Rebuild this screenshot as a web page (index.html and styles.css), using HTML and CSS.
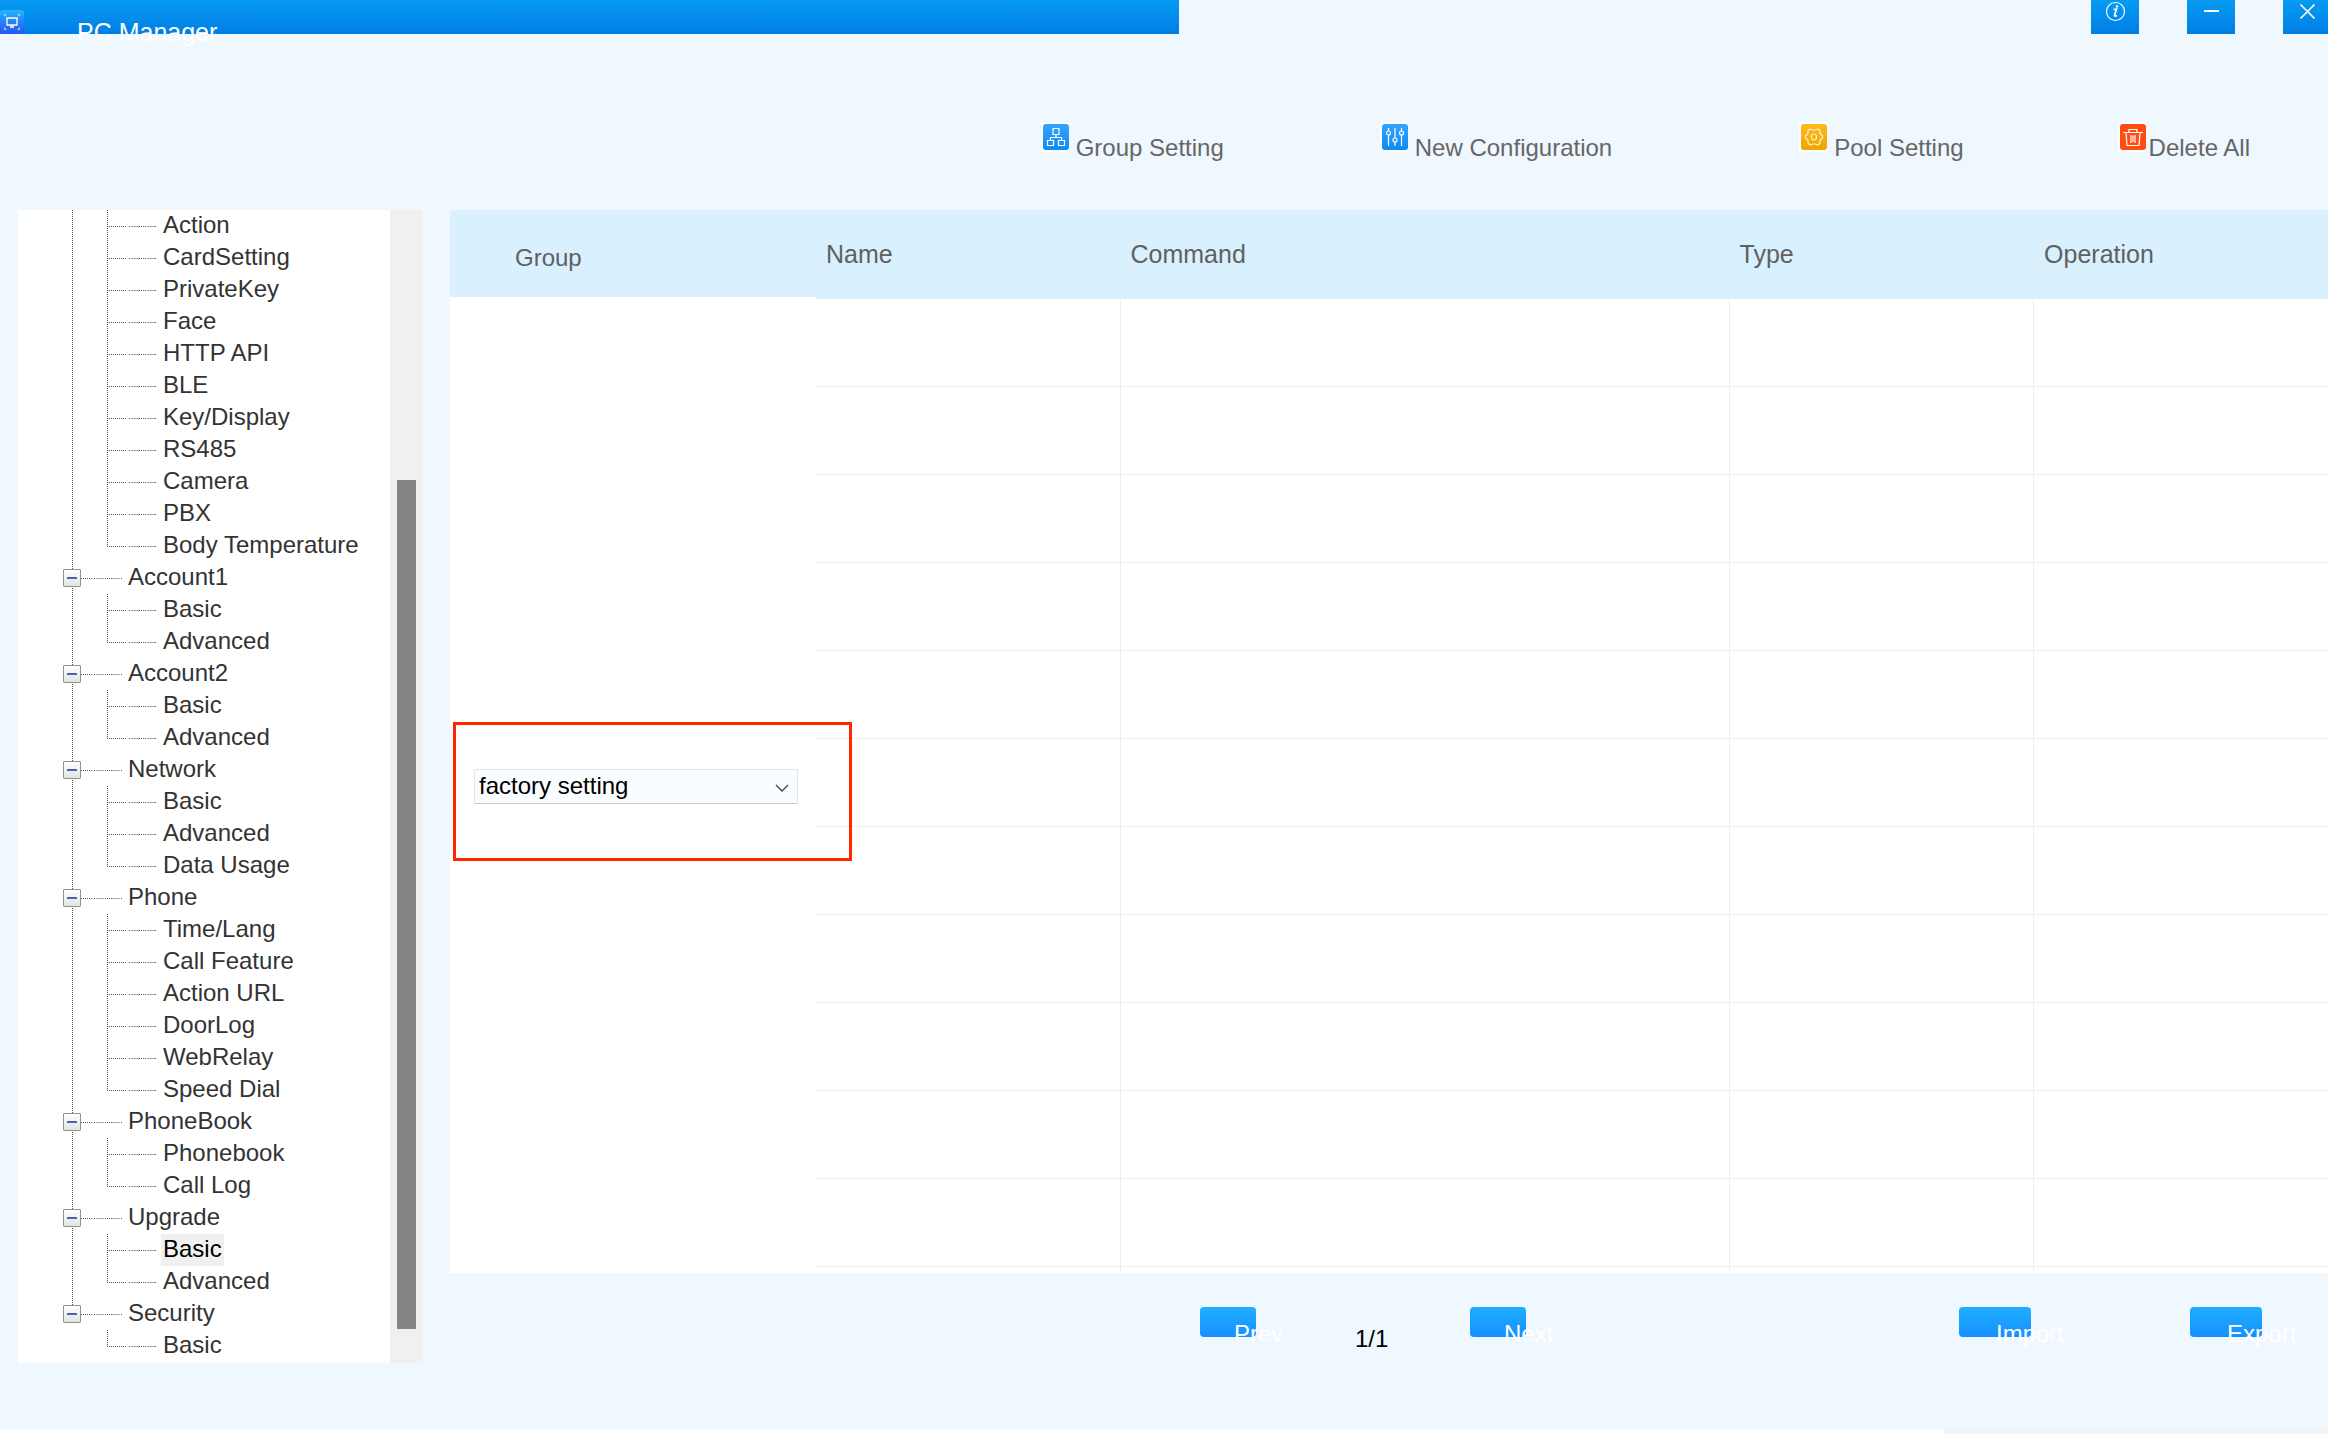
FILE: index.html
```html
<!DOCTYPE html>
<html lang="en">
<head>
<meta charset="utf-8">
<title>PC Manager</title>
<link rel="stylesheet" href="styles.css">
</head>
<body>
<div class="window">
  <header class="titlebar">
    <div class="brand">
      <svg class="brand-icon" viewBox="0 0 24 24" aria-hidden="true">
        <defs><linearGradient id="logo" x1="0" y1="0" x2="0" y2="1"><stop offset="0" stop-color="#1fb4ff"/><stop offset="1" stop-color="#2a55ee"/></linearGradient></defs>
        <rect width="24" height="24" rx="3" fill="url(#logo)"/>
        <path d="M7 8h10v7H7zM12 15v2M10 17h4" fill="none" stroke="#fff" stroke-width="1.3"/>
        <path d="M4 6l2-2M18 4l2 2M4 18l2 2M20 18l-2 2" fill="none" stroke="#b5e2ff" stroke-width="1.3"/>
      </svg>
      <h1 class="title">PC Manager</h1>
    </div>
    <div class="window-buttons">
      <button class="window-button" type="button" aria-label="About">
        <svg viewBox="0 0 48 34" aria-hidden="true"><circle cx="24.500" cy="11.500" r="9" fill="none" stroke="#fff" stroke-width="1.200"/><path d="M22.500 9.500l3-.5-2 6.500q0 1.200 2.500 0" fill="none" stroke="#fff" stroke-width="1.700"/><circle cx="26" cy="6.500" r="1.200" fill="#fff"/></svg>
      </button>
      <button class="window-button" type="button" aria-label="Minimize">
        <svg viewBox="0 0 48 34" aria-hidden="true"><path d="M17 11h15" stroke="#fff" stroke-width="2"/></svg>
      </button>
      <button class="window-button" type="button" aria-label="Close">
        <svg viewBox="0 0 48 34" aria-hidden="true"><path d="M17.500 4.500l14 14M31.500 4.500l-14 14" stroke="#fff" stroke-width="1.700"/></svg>
      </button>
    </div>
  </header>

  <nav class="toolbar" aria-label="Actions">
    <button class="tool tool-group" type="button">
      <svg class="tool-icon" viewBox="0 0 28 30" aria-hidden="true">
        <defs><linearGradient id="blue" x1="0" y1="0" x2="0" y2="1"><stop offset="0" stop-color="#33a5ff"/><stop offset="1" stop-color="#0c8bf0"/></linearGradient></defs>
        <rect width="28" height="30" fill="#fff"/><rect x="2" y="2" width="26" height="26" rx="3" fill="url(#blue)"/>
        <path d="M12 6.500h6v6h-6zM6.500 18.500h6v5h-6zM17.500 18.500h6v5h-6zM15 12.500v2.500M9.500 18.500V15.500h11v3" fill="none" stroke="#fff" stroke-width="1.200"/>
      </svg>
      <span>Group Setting</span>
    </button>
    <button class="tool tool-new" type="button">
      <svg class="tool-icon" viewBox="0 0 28 30" aria-hidden="true">
        <rect width="28" height="30" fill="#fff"/><rect x="2" y="2" width="26" height="26" rx="3" fill="url(#blue)"/>
        <path d="M8.500 6v3M8.500 13v11M15 6v10M15 20v4M21.500 6v3M21.500 13v11" stroke="#fff" stroke-width="1.200"/>
        <g fill="none" stroke="#fff" stroke-width="1.200"><circle cx="8.500" cy="11" r="2"/><circle cx="15" cy="18" r="2"/><circle cx="21.500" cy="11" r="2"/></g>
      </svg>
      <span>New Configuration</span>
    </button>
    <button class="tool tool-pool" type="button">
      <svg class="tool-icon" viewBox="0 0 28 30" aria-hidden="true">
        <defs><linearGradient id="gold" x1="0" y1="0" x2="0" y2="1"><stop offset="0" stop-color="#ffb91c"/><stop offset="1" stop-color="#eda600"/></linearGradient></defs>
        <rect width="28" height="30" fill="#fff"/><rect x="2" y="2" width="26" height="26" rx="3" fill="url(#gold)"/>
        <path d="M11 7l3 1h2l3-1 2 1.500v3L23.500 14v2L21 18v3l-2 2-3-1h-2l-3 1-2-2v-3l-2.500-2v-2L9 11.500v-3z" fill="none" stroke="#fff2cc" stroke-width="1.200" stroke-linejoin="round"/>
        <ellipse cx="15" cy="15" rx="2.500" ry="3" fill="none" stroke="#fff2cc" stroke-width="1.200"/>
      </svg>
      <span>Pool Setting</span>
    </button>
    <button class="tool tool-delete" type="button">
      <svg class="tool-icon" viewBox="0 0 28 30" aria-hidden="true">
        <rect width="28" height="30" fill="#fff"/><rect x="2" y="2" width="26" height="26" rx="3" fill="#ff4d12"/>
        <path d="M5 10.500h20M11 10V7.500h8V10M8 11l1 12.500h12L22 11M13 13v8M15 13.500v6.500M17 13v8" fill="none" stroke="#fff" stroke-width="1.200"/>
      </svg>
      <span>Delete All</span>
    </button>
  </nav>

  <div class="workspace">
    <aside class="sidebar">
      <ul class="tree">
        <li class="branch">
          <ul class="leaves">
            <li><a href="#">Action</a></li>
            <li><a href="#">CardSetting</a></li>
            <li><a href="#">PrivateKey</a></li>
            <li><a href="#">Face</a></li>
            <li><a href="#">HTTP API</a></li>
            <li><a href="#">BLE</a></li>
            <li><a href="#">Key/Display</a></li>
            <li><a href="#">RS485</a></li>
            <li><a href="#">Camera</a></li>
            <li><a href="#">PBX</a></li>
            <li><a href="#">Body Temperature</a></li>
          </ul>
        </li>
        <li class="branch">
          <div class="parent"><button class="toggle" type="button" aria-label="Collapse Account1"></button><a href="#">Account1</a></div>
          <ul class="leaves">
            <li><a href="#">Basic</a></li>
            <li><a href="#">Advanced</a></li>
          </ul>
        </li>
        <li class="branch">
          <div class="parent"><button class="toggle" type="button" aria-label="Collapse Account2"></button><a href="#">Account2</a></div>
          <ul class="leaves">
            <li><a href="#">Basic</a></li>
            <li><a href="#">Advanced</a></li>
          </ul>
        </li>
        <li class="branch">
          <div class="parent"><button class="toggle" type="button" aria-label="Collapse Network"></button><a href="#">Network</a></div>
          <ul class="leaves">
            <li><a href="#">Basic</a></li>
            <li><a href="#">Advanced</a></li>
            <li><a href="#">Data Usage</a></li>
          </ul>
        </li>
        <li class="branch">
          <div class="parent"><button class="toggle" type="button" aria-label="Collapse Phone"></button><a href="#">Phone</a></div>
          <ul class="leaves">
            <li><a href="#">Time/Lang</a></li>
            <li><a href="#">Call Feature</a></li>
            <li><a href="#">Action URL</a></li>
            <li><a href="#">DoorLog</a></li>
            <li><a href="#">WebRelay</a></li>
            <li><a href="#">Speed Dial</a></li>
          </ul>
        </li>
        <li class="branch">
          <div class="parent"><button class="toggle" type="button" aria-label="Collapse PhoneBook"></button><a href="#">PhoneBook</a></div>
          <ul class="leaves">
            <li><a href="#">Phonebook</a></li>
            <li><a href="#">Call Log</a></li>
          </ul>
        </li>
        <li class="branch">
          <div class="parent"><button class="toggle" type="button" aria-label="Collapse Upgrade"></button><a href="#">Upgrade</a></div>
          <ul class="leaves">
            <li><a class="selected" href="#" aria-current="page">Basic</a></li>
            <li><a href="#">Advanced</a></li>
          </ul>
        </li>
        <li class="branch">
          <div class="parent"><button class="toggle" type="button" aria-label="Collapse Security"></button><a href="#">Security</a></div>
          <ul class="leaves">
            <li><a href="#">Basic</a></li>
          </ul>
        </li>
      </ul>
      <div class="scrollbar"><div class="thumb"></div></div>
    </aside>

    <main class="content">
      <div class="panels">
        <section class="group-panel">
          <h2 class="group-heading"><label for="group">Group</label></h2>
          <div class="group-body">
            <div class="select-box">
              <select id="group"><option>factory setting</option></select>
              <svg class="chevron" viewBox="0 0 14 8" aria-hidden="true"><path d="M1 1l6 6 6-6" fill="none" stroke="#444" stroke-width="1.300"/></svg>
              <div class="callout"></div>
            </div>
          </div>
        </section>
        <section class="table-panel">
          <table class="commands">
            <colgroup><col class="col-name"><col class="col-command"><col class="col-type"><col></colgroup>
            <thead><tr><th scope="col">Name</th><th scope="col">Command</th><th scope="col">Type</th><th scope="col">Operation</th></tr></thead>
            <tbody>
              <tr><td></td><td></td><td></td><td></td></tr>
              <tr><td></td><td></td><td></td><td></td></tr>
              <tr><td></td><td></td><td></td><td></td></tr>
              <tr><td></td><td></td><td></td><td></td></tr>
              <tr><td></td><td></td><td></td><td></td></tr>
              <tr><td></td><td></td><td></td><td></td></tr>
              <tr><td></td><td></td><td></td><td></td></tr>
              <tr><td></td><td></td><td></td><td></td></tr>
              <tr><td></td><td></td><td></td><td></td></tr>
              <tr><td></td><td></td><td></td><td></td></tr>
              <tr><td></td><td></td><td></td><td></td></tr>
              <tr class="cut"><td></td><td></td><td></td><td></td></tr>
            </tbody>
          </table>
        </section>
      </div>
      <footer class="footer">
        <div class="pager">
          <button class="action page" type="button"><span>Prev</span></button>
          <span class="page-count">1/1</span>
          <button class="action page" type="button"><span>Next</span></button>
        </div>
        <div class="transfer">
          <button class="action file" type="button"><span>Import</span></button>
          <button class="action file" type="button"><span>Export</span></button>
        </div>
      </footer>
    </main>
  </div>
  <div class="bottom-strip"><div class="bottom-strip-end"></div></div>
</div>
</body>
</html>
```
FILE: styles.css
```css
* {
  box-sizing: border-box;
}

body {
  margin: 0;
  background: #eff7ff;
  color: #333;
  font: 24px/32px "Liberation Sans", Arial, sans-serif;
}

button {
  margin: 0;
  padding: 0;
  border: 0;
  background: none;
  color: inherit;
  font: inherit;
}

a {
  color: inherit;
  text-decoration: none;
}

ul {
  margin: 0;
  padding: 0;
  list-style: none;
}

h1,
h2 {
  margin: 0;
  font-weight: 400;
}

.window {
  display: flex;
  flex-direction: column;
  min-height: 100vh;
  overflow: hidden;
}

/* Title bar */
.titlebar {
  display: flex;
  justify-content: space-between;
  height: 34px;
}

.brand {
  display: flex;
  gap: 53px;
  width: 1179px;
  background: linear-gradient(#079bf3, #007ee5);
}

.brand-icon {
  width: 24px;
  height: 24px;
  margin-top: 10px;
}

.title {
  padding-top: 16px;
  color: #fff;
  font-size: 25px;
  line-height: 32px;
}

.window-buttons {
  display: flex;
  gap: 48px;
  margin-right: -3px;
}

.window-button {
  width: 48px;
  height: 34px;
  background: linear-gradient(#079bf3, #007ee5);
}

.window-button svg {
  display: block;
}

/* Toolbar */
.toolbar {
  display: flex;
  justify-content: flex-end;
  height: 176px;
  padding: 88px 78px 0 0;
  color: #666;
}

.tool {
  display: flex;
  align-items: flex-start;
  gap: 7px;
  height: 48px;
  white-space: nowrap;
}

.tool span {
  padding-top: 10px;
}

.tool-icon {
  width: 28px;
  height: 30px;
}

.tool-new {
  margin-left: 156px;
}

.tool-pool {
  margin-left: 187px;
}

.tool-delete {
  gap: 3px;
  margin-left: 154px;
}

/* Tree */
.workspace {
  display: flex;
  align-items: flex-start;
  gap: 27px;
  padding-left: 18px;
}

.sidebar {
  display: flex;
  flex: none;
  width: 405px;
  background: #fff;
}

.tree {
  flex: 1;
  padding-bottom: 1px;
}

.branch {
  padding-left: 45px;
  background: repeating-linear-gradient(#555 0 1px, transparent 1px 2px) 54px 0 / 1px 100% no-repeat;
}

.branch:last-child {
  background-size: 1px 16px;
}

.parent {
  display: flex;
  align-items: center;
  height: 32px;
}

.toggle {
  width: 18px;
  height: 18px;
  border: 1px solid #919191;
  border-radius: 1px;
  background:
    linear-gradient(#4b63a7, #4b63a7) center / 10px 2px no-repeat,
    linear-gradient(#fff, #e2e2e2);
}

.parent a,
.leaves a {
  padding: 0 2px 2px;
  line-height: 30px;
}

/* Dotted connector whose right-hand end carries two solid dashes */
.parent::after,
.leaves li::before {
  flex: none;
  height: 1px;
  background:
    linear-gradient(90deg, #fff 0 2px, #555 2px 3px, #fff 3px 4px, #aaa 4px 12px, transparent 12px 20px, #aaa 20px 28px, transparent 28px) right / 30px 1px no-repeat,
    repeating-linear-gradient(90deg, #555 0 1px, #fff 1px 2px);
  content: "";
}

.parent::after {
  order: 1;
  width: 41px;
  margin-right: 4px;
}

.parent a {
  order: 2;
}

.leaves {
  padding-left: 44px;
}

.leaves li {
  display: flex;
  align-items: center;
  height: 32px;
  background: repeating-linear-gradient(#555 0 1px, transparent 1px 2px) 0 0 / 1px 100% no-repeat;
}

.leaves li:last-child {
  background-size: 1px 16px;
}

.leaves li::before {
  width: 50px;
  margin-right: 4px;
}

.leaves .selected {
  background: #f0f0f0;
  color: #000;
}

.scrollbar {
  width: 33px;
  padding: 270px 7px 34px;
  background: #f0f0f0;
}

.thumb {
  width: 19px;
  height: 100%;
  background: #858585;
}

/* Content */
.content {
  flex: 1;
  min-width: 0;
}

.panels {
  display: flex;
  background: #fff;
}

.group-panel {
  display: flex;
  flex: none;
  flex-direction: column;
  width: 366px;
}

.group-heading {
  height: 87px;
  padding: 32px 65px 0;
  background: #d9f0ff;
  color: #606060;
  font-size: 24px;
}

.group-body {
  display: flex;
  flex: 1;
  align-items: center;
  padding: 2px 0 0 24px;
}

.select-box {
  position: relative;
  width: 324px;
}

.select-box select {
  display: block;
  width: 100%;
  height: 35px;
  padding: 0 4px;
  border: 1px solid #dfe6ee;
  border-bottom-color: #c3cad4;
  border-radius: 2px;
  appearance: none;
  background: #fafdff;
  color: #000;
  font: inherit;
}

.chevron {
  position: absolute;
  top: 15px;
  right: 9px;
  width: 14px;
  height: 8px;
}

.callout {
  position: absolute;
  inset: -47px -54px -57px -21px;
  border: 3px solid #ff2600;
  pointer-events: none;
}

.table-panel {
  flex: 1;
  min-width: 0;
}

.commands {
  width: 100%;
  border-collapse: separate;
  border-spacing: 0;
  table-layout: fixed;
}

.col-name,
.col-type {
  width: 20.14%;
}

.col-command {
  width: 40.28%;
}

.commands th {
  height: 89px;
  padding: 0 10px 2px;
  background: #d9f0ff;
  color: #606060;
  font-size: 25px;
  font-weight: 400;
  text-align: left;
}

.commands td {
  height: 88px;
  padding: 0;
  border-right: 1px solid #eee;
  border-bottom: 1px solid #eee;
}

.commands td:last-child {
  border-right: 0;
}

.commands .cut td {
  height: 6px;
  border-bottom: 0;
}

/* Footer */
.footer {
  display: flex;
  justify-content: space-between;
  padding: 34px 66px 0 750px;
}

.pager,
.transfer {
  display: flex;
}

.pager {
  gap: 99px;
}

.transfer {
  gap: 159px;
}

.action {
  display: flex;
  height: 30px;
  border-radius: 4px;
  background: linear-gradient(#1eb0ff, #188fff);
  color: #fff;
  white-space: nowrap;
}

.page {
  width: 56px;
  padding: 11px 0 0 34px;
}

.file {
  width: 72px;
  padding: 11px 0 0 37px;
}

.page-count {
  width: 16px;
  padding-top: 16px;
  color: #000;
}

.bottom-strip {
  display: flex;
  justify-content: flex-end;
  height: 5px;
  margin-top: auto;
  background: #fff;
}

.bottom-strip-end {
  width: 384px;
  background: #f3f4f5;
}
```
